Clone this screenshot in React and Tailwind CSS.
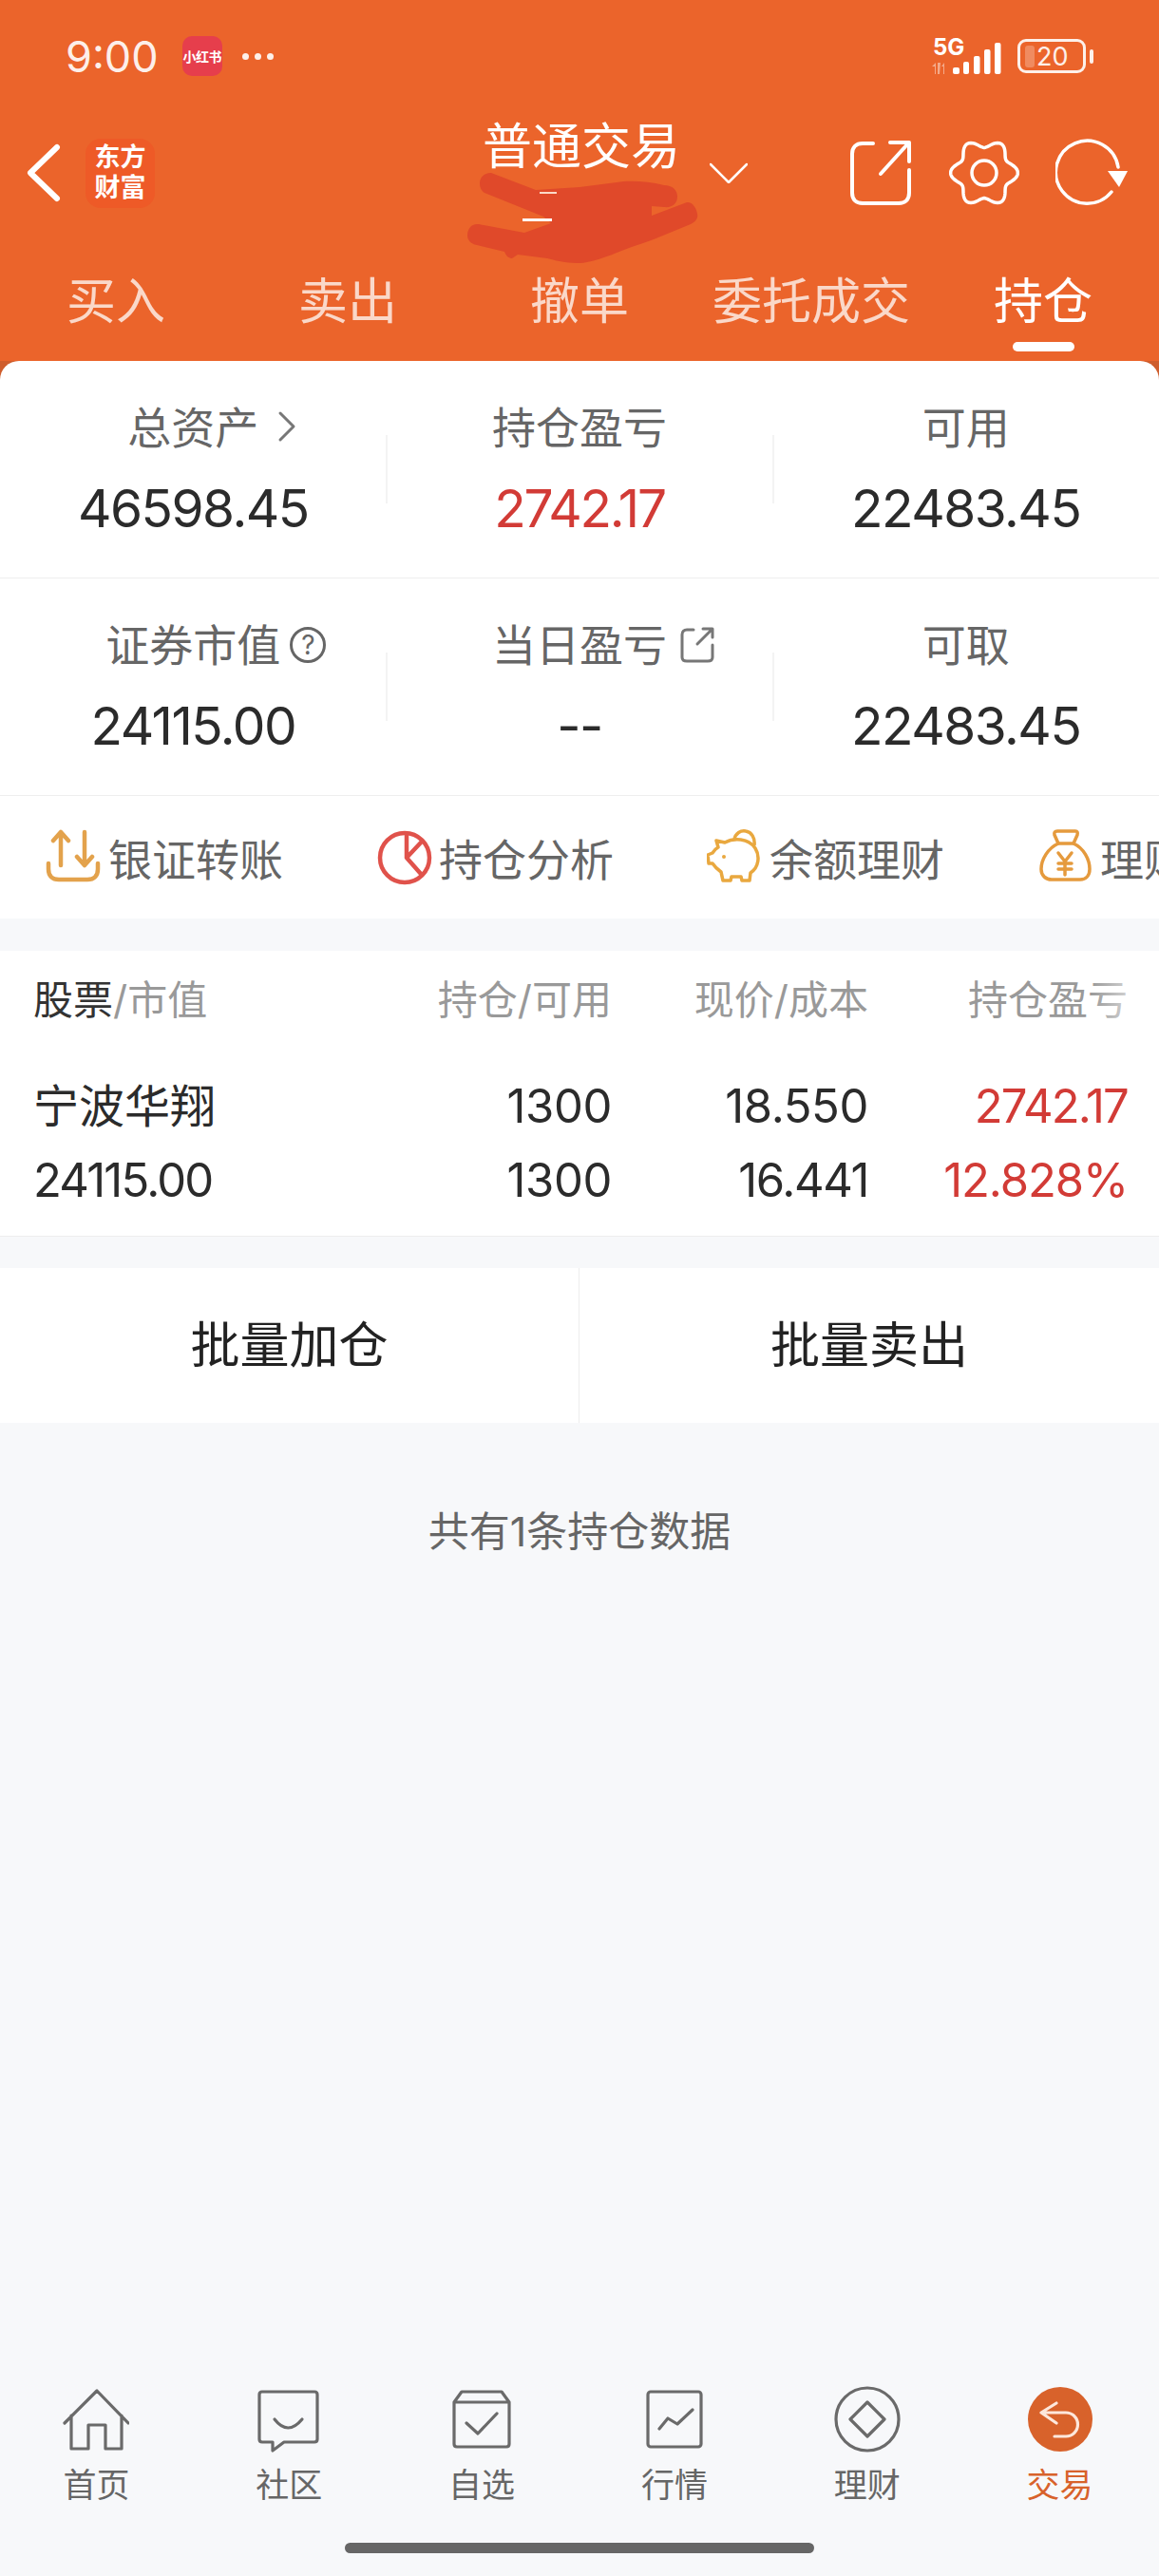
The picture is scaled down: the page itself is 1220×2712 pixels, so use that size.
import React from 'react';

const tabs = ['买入', '卖出', '撤单', '委托成交', '持仓'];

// Wavy six-lobed outline for the settings gear
const gearPath = () => {
  const pts = [];
  for (let i = 0; i < 120; i++) {
    const a = (i / 120) * Math.PI * 2;
    const r = 31 + 4.4 * Math.cos(6 * a);
    pts.push(`${(37 + r * Math.cos(a)).toFixed(2)} ${(35 + r * Math.sin(a)).toFixed(2)}`);
  }
  return `M${pts.join('L')}Z`;
};

function StatusBar() {
  return (
    <div className="flex h-[118px] items-center pl-[69px] pr-[69px] text-white">
      <span className="text-[45px] leading-none opacity-90">9:00</span>
      <span className="ml-[25px] flex h-[42px] w-[42px] items-center justify-center rounded-[10px] bg-[#e63e4c] text-[14px] font-bold tracking-[-0.5px] whitespace-nowrap">
        小红书
      </span>
      <span className="ml-[21px] flex gap-[6px]">
        <i className="h-[7px] w-[7px] rounded-full bg-white/90" />
        <i className="h-[7px] w-[7px] rounded-full bg-white/90" />
        <i className="h-[7px] w-[7px] rounded-full bg-white/90" />
      </span>
      <div className="ml-auto flex items-center">
        <svg className="mb-[10px]" width="76" height="52" viewBox="980 26 76 52" fill="#fff">
          <text x="982" y="56" fontSize="24" fontWeight="700" fontFamily="Inter">5G</text>
          <path d="M984 76v-8h-3l4-4 0 12zM994 64v12h-1V68h-2zM990 64l-1 12h-2V64z" opacity=".45" />
          <rect x="1003" y="69" width="7" height="7" rx="2" />
          <rect x="1014" y="63" width="6" height="13" rx="2" />
          <rect x="1025" y="57" width="6.5" height="19" rx="2" />
          <rect x="1036" y="50" width="6.5" height="26" rx="2" />
          <rect x="1047" y="43" width="6.5" height="33" rx="2" />
        </svg>
        <div className="ml-[15px] flex h-[36px] w-[72px] items-center rounded-[9px] border-[3px] border-white/90 pl-[5px]">
          <span className="h-[23px] w-[10px] rounded-[3px] bg-white/25" />
          <span className="ml-[2px] text-[27px] leading-none text-white/90">20</span>
        </div>
        <span className="ml-[4px] h-[15px] w-[4px] rounded-full bg-white/90" />
      </div>
    </div>
  );
}

function NavRow() {
  return (
    <div className="grid h-[128px] grid-cols-[1fr_204px_1fr] items-center text-white">
      <div className="flex items-center pl-[27px]">
        <svg width="38" height="62" viewBox="0 0 38 62" fill="none" stroke="#fff" strokeWidth="6" strokeLinecap="round" strokeLinejoin="round">
          <path d="M33 4 5 31l28 27" />
        </svg>
        <div className="ml-[25px] flex h-[73px] w-[73px] items-center justify-center rounded-[16px] bg-[#ee5a27] text-center text-[27px] leading-[32px] font-bold">
          东方<br />财富
        </div>
      </div>
      <div className="h-[114px]">
        <div className="text-[52px] leading-[60px] whitespace-nowrap">普通交易</div>
      </div>
      <div className="flex items-center pr-[33px]">
        <svg className="ml-[35px] mr-auto" width="40" height="22" viewBox="0 0 40 22" fill="none" stroke="#fff" strokeWidth="2.5" strokeLinecap="round" strokeLinejoin="round">
          <path d="M1 2l19 19L39 2" />
        </svg>
        <svg width="66" height="72" viewBox="0 0 66 72" fill="none" stroke="#fff" strokeWidth="4" strokeLinecap="round" strokeLinejoin="round">
          <path d="M25 5H14C7 5 3 9 3 16v41c0 7 4 11 11 11h38c7 0 11-4 11-11V33" />
          <path d="M33 37 62 5M43 4h20v20" />
        </svg>
        <svg className="ml-[39px]" width="74" height="70" viewBox="0 0 74 70" fill="none" stroke="#fff" strokeWidth="3.5" strokeLinejoin="round">
          <path d={gearPath()} />
          <circle cx="37" cy="35" r="13" />
        </svg>
        <svg className="ml-[38px]" width="76" height="72" viewBox="0 0 76 72" fill="none">
          <path d="M59 56A33 33 0 1 1 66 30" stroke="#fff" strokeWidth="3.5" strokeLinecap="round" />
          <path d="M55 34h21l-9 17z" fill="#fff" />
        </svg>
      </div>
    </div>
  );
}

// Hand-drawn marker stroke over the account line under the title
function Scribble() {
  return (
    <svg className="absolute left-[490px] top-[180px]" width="250" height="100" viewBox="490 180 250 100">
      <path
        fill="#e0492a"
        d="M517 182C508 182 505 188 505 193C505 198 507 201 510 203L572 228L580 235L552 245L504 236C496 235 492 241 492 248C492 253 496 257 502 258L531 265C533 270 536 272 539 272L545 268L576 272C590 276 600 277 610 277C620 277 640 270 657 263C670 258 680 255 688 252L727 236C733 233 735 229 734 225C733 218 728 212 723 213L686 227L686 217L699 218C708 219 713 214 713 207C713 200 708 195 699 195C680 190 660 190 649 192L610 197L564 200Z"
      />
      <rect x="550" y="230" width="31" height="3" fill="#fff" />
      <rect x="568" y="202" width="18" height="2" fill="#fbd9c8" />
    </svg>
  );
}

function Header() {
  return (
    <div className="relative bg-[#eb642b]">
      <StatusBar />
      <NavRow />
      <Scribble />
      <div className="grid h-[134px] grid-cols-5 pt-[42px]">
        {tabs.map((t, i) => (
          <div key={t} className="flex flex-col items-center">
            <span className={`text-[52px] leading-[60px] ${i === 4 ? 'text-white' : 'text-white/75'}`}>{t}</span>
            {i === 4 && <span className="mt-[12px] h-[10px] w-[65px] rounded-full bg-white" />}
          </div>
        ))}
      </div>
    </div>
  );
}

function Stat({ label, value, red, icon }) {
  return (
    <div className="flex flex-col items-center">
      <span className="relative text-[46px] leading-[52px] text-[#666]">
        {label}
        {icon}
      </span>
      <span className={`mt-[29px] text-[55px] leading-[60px] ${red ? 'tracking-[-2.2px] text-[#d23b36]' : 'tracking-[-1.5px] text-[#2b2b2b]'}`}>{value}</span>
    </div>
  );
}

function StatRow({ children, height, border }) {
  return (
    <div className={`relative grid grid-cols-3 pt-[44px] ${height} ${border ? 'border-b-[1.5px] border-[#eeeeee]' : ''}`}>
      {children}
      <span className="absolute left-[406px] top-[78px] h-[72px] w-[2px] bg-[#f3f3f3]" />
      <span className="absolute left-[813px] top-[78px] h-[72px] w-[2px] bg-[#f3f3f3]" />
    </div>
  );
}

function Stats() {
  return (
    <>
      <StatRow height="h-[229px]" border>
        <Stat
          label="总资产"
          value="46598.45"
          icon={
            <svg className="absolute left-[157px] top-[8px]" width="22" height="34" viewBox="0 0 22 34" fill="none" stroke="#777" strokeWidth="3" strokeLinecap="round" strokeLinejoin="round">
              <path d="M4 3l14 14L4 31" />
            </svg>
          }
        />
        <Stat label="持仓盈亏" value="2742.17" red />
        <Stat label="可用" value="22483.45" />
      </StatRow>
      <StatRow height="h-[229px]" border>
        <Stat
          label="证券市值"
          value="24115.00"
          icon={
            <span className="absolute left-[194px] top-[7px] flex h-[38px] w-[38px] items-center justify-center rounded-full border-[3px] border-[#666] text-[28px] leading-none">?</span>
          }
        />
        <Stat
          label="当日盈亏"
          value="--"
          icon={
            <svg className="absolute left-[198px] top-[7px]" width="36" height="38" viewBox="0 0 36 38" fill="none" stroke="#777" strokeWidth="3" strokeLinecap="round" strokeLinejoin="round">
              <path d="M14 3H7C4 3 2 5 2 8v24c0 3 2 4 5 4h22c3 0 5-1 5-4V19" />
              <path d="M18 18 33 3M24 2h10v9" />
            </svg>
          }
        />
        <Stat label="可取" value="22483.45" />
      </StatRow>
    </>
  );
}

const TransferIcon = () => (
  <svg width="60" height="60" viewBox="48 875 60 60" fill="none" stroke="#e3a24c" strokeWidth="4.5" strokeLinecap="round" strokeLinejoin="round">
    <path d="M64 913V878M56 887l8-9 8 9M89 878v35M81 904l8 9 8-9" />
    <path d="M51 911v6c0 7 4 11 11 11h30c7 0 11-4 11-11v-6" />
  </svg>
);

const PieIcon = () => (
  <svg width="60" height="60" viewBox="394 873 60 60" fill="none" stroke="#e0524b" strokeWidth="4.5" strokeLinecap="round" strokeLinejoin="round">
    <circle cx="424" cy="903" r="26" />
    <path d="M426 878v25l15 17M426 903l15-16" />
  </svg>
);

const PigIcon = () => (
  <svg width="60" height="60" viewBox="744 875 60 60" fill="none" stroke="#e9a83f" strokeWidth="3.5" strokeLinejoin="round">
    <path d="M773 886C774 879 780 876 785 877C791 878 795 884 794 892" />
    <path d="M754 887L763 889C772 884 788 884 795 895C800 903 799 915 790 921L789 929L781 929L780 925L770 925L769 929L761 929L759 920C755 917 752 914 750 911L746 911L745 902L750 900C752 897 754 895 756 894Z" />
    <circle cx="762" cy="904" r="2" fill="#e9a83f" stroke="none" />
  </svg>
);

const BagIcon = () => (
  <svg width="60" height="60" viewBox="1091 875 60 60" fill="none" stroke="#e59a3d" strokeWidth="3.5" strokeLinecap="round" strokeLinejoin="round">
    <path d="M1112 877H1131Q1134 877 1133 881L1129 890C1140 895 1146 907 1146 917C1146 924 1142 928 1136 928H1106C1100 928 1095 924 1095 917C1095 907 1102 895 1113 890L1109 881Q1108 877 1112 877Z" />
    <path d="M1113 890H1129M1113 900L1120 909L1127 900M1113 911H1127M1113 917H1127M1120 909V923" />
  </svg>
);

const shortcuts = [
  { label: '银证转账', Icon: TransferIcon },
  { label: '持仓分析', Icon: PieIcon },
  { label: '余额理财', Icon: PigIcon },
  { label: '理财产品', Icon: BagIcon },
];

function Shortcuts() {
  return (
    <div className="flex h-[129px] items-center overflow-hidden pl-[48px]">
      {shortcuts.map(({ label, Icon }) => (
        <div key={label} className="flex w-[348px] shrink-0 items-center">
          <Icon />
          <span className="ml-[6px] mt-[4px] text-[46px] leading-none whitespace-nowrap text-[#666]">{label}</span>
        </div>
      ))}
    </div>
  );
}

function Holdings() {
  const cols = 'grid grid-cols-[339px_270px_270px_273px] text-right';
  return (
    <div className="mt-[34px] h-[301px] border-b-[1.5px] border-[#eeeeee] bg-white pl-[35px] pt-[27px]">
      <div className={`relative text-[42px] leading-[50px] text-[#999] ${cols}`}>
        <span className="text-left whitespace-nowrap"><span className="text-[#333]">股票</span>/市值</span>
        <span>持仓/可用</span>
        <span>现价/成本</span>
        <span>持仓盈亏</span>
        <span className="absolute right-0 top-0 h-full w-[72px] bg-linear-to-r from-white/0 to-white" />
      </div>
      <div className={`mt-[57px] text-[49px] leading-[60px] text-[#2b2b2b] ${cols}`}>
        <span className="text-left text-[48px]">宁波华翔</span>
        <span className="tracking-[-0.4px]">1300</span>
        <span className="tracking-[-0.4px]">18.550</span>
        <span className="tracking-[-1.8px] text-[#d23b36]">2742.17</span>
      </div>
      <div className={`mt-[18px] text-[49px] leading-[60px] text-[#2b2b2b] ${cols}`}>
        <span className="text-left tracking-[-1.8px]">24115.00</span>
        <span className="tracking-[-0.4px]">1300</span>
        <span className="tracking-[-1.4px]">16.441</span>
        <span className="tracking-[-1.1px] text-[#d23b36]">12.828%</span>
      </div>
    </div>
  );
}

function BulkActions() {
  return (
    <div className="mt-[33px] grid h-[163px] grid-cols-2 bg-white text-[52px] text-[#222]">
      <div className="flex items-center justify-center border-r-[1.5px] border-[#eeeeee]">批量加仓</div>
      <div className="flex items-center justify-center">批量卖出</div>
    </div>
  );
}

const navStroke = { fill: 'none', stroke: '#6a6a6a', strokeWidth: 3.2, strokeLinecap: 'round', strokeLinejoin: 'round' };

const navItems = [
  {
    label: '首页',
    icon: (
      <svg width="70" height="70" viewBox="0 0 70 70" {...navStroke}>
        <path d="M2 39 36 5l33 34M9 31v35h18V41h18v25h17V31" />
      </svg>
    ),
  },
  {
    label: '社区',
    icon: (
      <svg width="70" height="70" viewBox="0 0 70 70" {...navStroke}>
        <path d="M7 6h55q3 0 3 3v47q0 3-3 3H30l-12 9v-9H7q-3 0-3-3V9q0-3 3-3z" />
        <path d="M20 35q14 18 29 0" />
      </svg>
    ),
  },
  {
    label: '自选',
    icon: (
      <svg width="70" height="70" viewBox="0 0 70 70" {...navStroke}>
        <path d="M14 6h42l8 11v44q0 3-3 3H9q-3 0-3-3V17zM6 17h58" />
        <path d="M19 39l12 11 20-21" />
      </svg>
    ),
  },
  {
    label: '行情',
    icon: (
      <svg width="70" height="70" viewBox="0 0 70 70" {...navStroke}>
        <rect x="7" y="6" width="56" height="58" rx="3" />
        <path d="M19 45l9-11 10 6 16-15" />
      </svg>
    ),
  },
  {
    label: '理财',
    icon: (
      <svg width="70" height="70" viewBox="0 0 70 70" {...navStroke}>
        <circle cx="35" cy="35" r="33" />
        <path d="M35 17l18 18-18 18-18-18z" />
      </svg>
    ),
  },
  {
    label: '交易',
    active: true,
    icon: (
      <svg width="70" height="70" viewBox="0 0 70 70" fill="none" stroke="#fde7db" strokeWidth="3.2" strokeLinecap="round" strokeLinejoin="round">
        <circle cx="35" cy="35" r="34" fill="#d8622b" stroke="none" />
        <path d="M15 28h26a12.5 12.5 0 0 1 0 25H29M31 18 15 28l16 11" />
      </svg>
    ),
  },
];

function BottomNav() {
  return (
    <div className="pt-[7px]">
      <div className="grid grid-cols-6 pr-[3px]">
        {navItems.map((item) => (
          <div key={item.label} className="flex flex-col items-center">
            {item.icon}
            <span className={`mt-[17px] text-[35px] leading-[34px] ${item.active ? 'text-[#d8622b]' : 'text-[#666]'}`}>{item.label}</span>
          </div>
        ))}
      </div>
      <div className="mx-auto mb-[24px] mt-[44px] h-[11px] w-[494px] rounded-full bg-[#666]" />
    </div>
  );
}

export default function App() {
  return (
    <div className="flex h-[2712px] flex-col overflow-hidden bg-[#f7f8fa] font-['Inter','Noto_Sans_CJK_SC',sans-serif]">
      <Header />
      <div className="bg-[#cf5d2c]">
        <div className="rounded-t-[20px] bg-white">
          <Stats />
          <Shortcuts />
        </div>
      </div>
      <Holdings />
      <BulkActions />
      <div className="flex-1 pt-[90px] text-center text-[43px] leading-[48px] text-[#666]">共有1条持仓数据</div>
      <BottomNav />
    </div>
  );
}
